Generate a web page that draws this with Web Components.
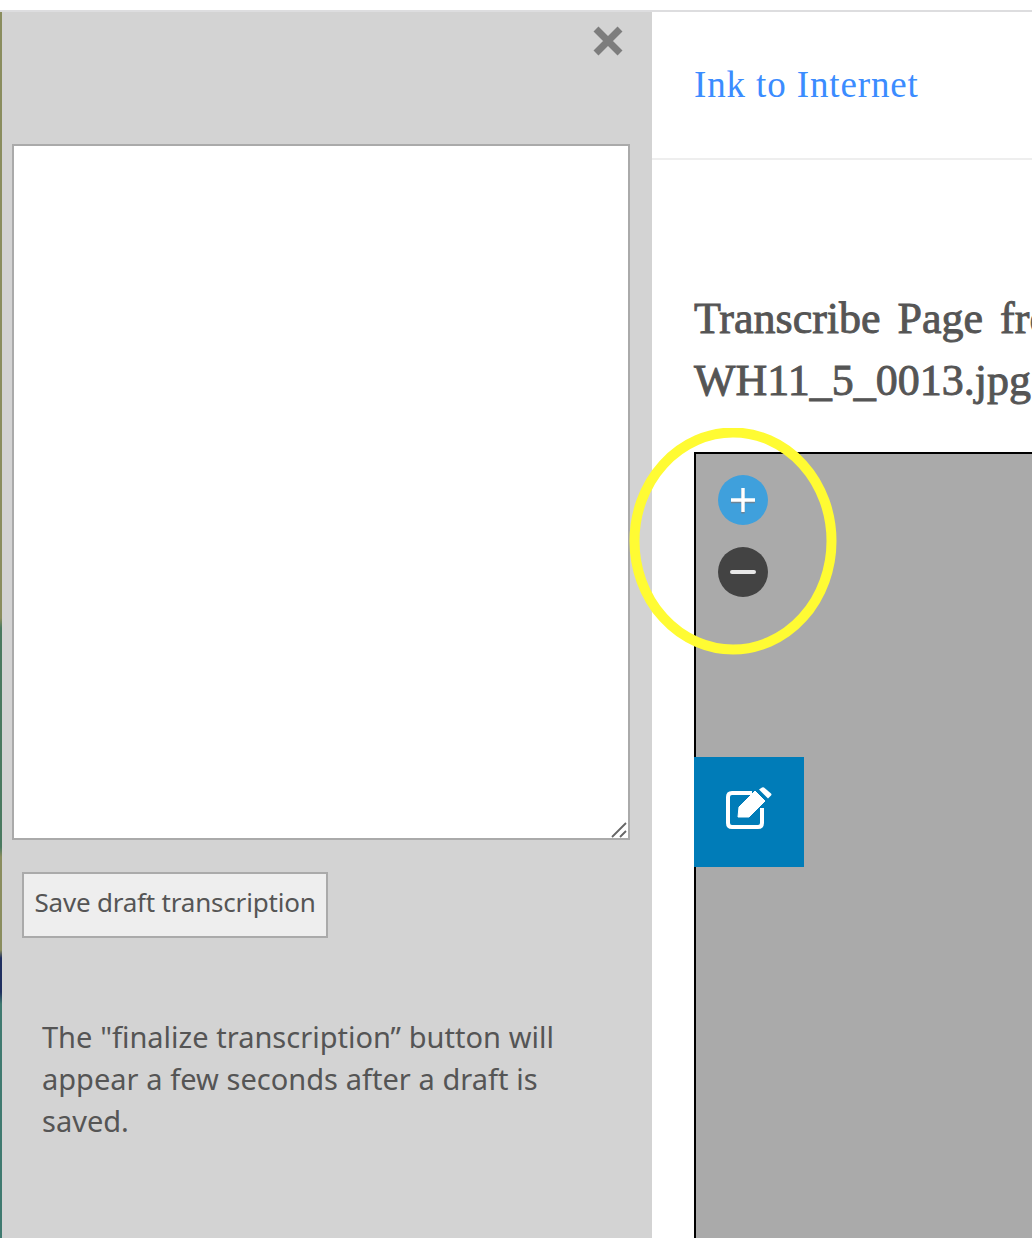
<!DOCTYPE html>
<html lang="en">
<head>
<meta charset="utf-8">
<title>Transcribe Page</title>
<style>
  html, body { margin: 0; height: 100%; background: #fff; overflow: hidden; }
</style>
</head>
<body>
<transcribe-page>
  <transcribe-panel slot="panel">
    The "finalize transcription” button will appear a few seconds after a draft is saved.
  </transcribe-panel>
  <page-main slot="main" brand="Ink to Internet">
    <span slot="heading">Transcribe Page from<br>WH11_5_0013.jpg</span>
  </page-main>
</transcribe-page>

<script>
class TranscribePage extends HTMLElement {
  constructor() {
    super();
    this.attachShadow({ mode: 'open' });
  }

  connectedCallback() {
    this.render();
  }

  render() {
    this.shadowRoot.innerHTML = `
      <style>
        :host {
          display: block;
          width: 1032px;
          height: 1238px;
          overflow: hidden;
          padding-top: 10px;
          box-sizing: border-box;
        }
        .frame {
          display: flex;
          height: 1228px;
          border-top: 2px solid #dddddf;
          box-sizing: border-box;
        }
        .edge {
          flex: 0 0 2px;
          background: linear-gradient(#8a8d5e 0, #8a8d5e 606px, #4a7a60 616px, #4a7a60 835px, #8a8d5e 845px, #8a8d5e 938px, #1f2f60 946px, #1f2f60 980px, #3f7a70 992px);
        }
        ::slotted([slot="panel"]) { flex: 0 0 650px; }
        ::slotted([slot="main"]) { flex: 1; min-width: 0; }
      </style>
      <div class="frame">
        <div class="edge"></div>
        <slot name="panel"></slot>
        <slot name="main"></slot>
      </div>
    `;
  }
}

class TranscribePanel extends HTMLElement {
  constructor() {
    super();
    this.attachShadow({ mode: 'open' });
  }

  connectedCallback() {
    this.render();
  }

  render() {
    this.shadowRoot.innerHTML = `
      <style>
        :host {
          display: block;
          background: #d3d3d3;
          box-sizing: border-box;
          padding: 0 22px 0 10px;
          font-family: "Noto Sans", sans-serif;
          color: #555;
        }
        .top {
          height: 132px;
          display: flex;
          justify-content: flex-end;
          align-items: flex-start;
          padding: 13px 0 0;
          box-sizing: border-box;
        }
        .close { display: block; margin-right: 6px; }
        .editor {
          position: relative;
          width: 618px;
          height: 696px;
        }
        textarea {
          display: block;
          width: 100%;
          height: 100%;
          margin: 0;
          padding: 0;
          box-sizing: border-box;
          border: 2px solid #aaa;
          background: #fff;
          border-radius: 0;
          outline: none;
          resize: none;
        }
        .grip {
          position: absolute;
          right: 2px;
          bottom: 2px;
        }
        button {
          display: block;
          margin: 32px 0 0 10px;
          width: 306px;
          height: 66px;
          box-sizing: border-box;
          border: 2px solid #aaa;
          border-radius: 0;
          background: #eee;
          color: #555;
          font: 26px/1 "Noto Sans", sans-serif;
          letter-spacing: -0.2px;
          padding: 0 0 6px;
          white-space: nowrap;
        }
        p {
          margin: 78px 0 0 30px;
          width: 530px;
          font-size: 29px;
          line-height: 42px;
          word-spacing: 0.2px;
        }
      </style>
      <div class="top">
        <svg class="close" width="32" height="32" viewBox="0 0 32 32" aria-label="Close">
          <path d="M4 4 28 28M28 4 4 28" stroke="#7d7d7d" stroke-width="7" fill="none"/>
        </svg>
      </div>
      <div class="editor">
        <textarea></textarea>
        <svg class="grip" width="18" height="16" viewBox="0 0 18 16">
          <path d="M2 15 16 1M10 15 16 9" stroke="#666" stroke-width="1.8" fill="none"/>
        </svg>
      </div>
      <button type="button">Save draft transcription</button>
      <p><slot></slot></p>
    `;
  }
}

class PageMain extends HTMLElement {
  constructor() {
    super();
    this.attachShadow({ mode: 'open' });
  }

  static get observedAttributes() {
    return ['brand'];
  }

  get brand() {
    return this.getAttribute('brand') || '';
  }

  connectedCallback() {
    this.render();
  }

  render() {
    this.shadowRoot.innerHTML = `
      <style>
        :host {
          display: block;
          position: relative;
          background: #fff;
          height: 100%;
        }
        header {
          height: 148px;
          box-sizing: border-box;
          border-bottom: 2px solid #eee;
          padding: 51px 0 0 42px;
        }
        a {
          color: #3b8cff;
          text-decoration: none;
          font: 37px/44px "Liberation Serif", serif;
          letter-spacing: 0.87px;
        }
        h2 {
          margin: 128px 0 0 42px;
          width: 600px;
          height: 124px;
          color: #555;
          font: 400 44px/62px "Liberation Serif", serif;
          -webkit-text-stroke: 0.9px #555;
          word-spacing: 6px;
          white-space: nowrap;
        }
        .ring {
          position: absolute;
          left: -24px;
          top: 416px;
        }
      </style>
      <header><a href="#">${this.brand}</a></header>
      <h2><slot name="heading"></slot></h2>
      <image-viewer></image-viewer>
      <svg class="ring" width="210" height="230" viewBox="0 0 210 230">
        <ellipse cx="105" cy="113" rx="98.5" ry="108.5" fill="none" stroke="#fffb33" stroke-width="10"/>
      </svg>
    `;
  }
}

class ImageViewer extends HTMLElement {
  constructor() {
    super();
    this.attachShadow({ mode: 'open' });
  }

  connectedCallback() {
    this.render();
  }

  render() {
    this.shadowRoot.innerHTML = `
      <style>
        :host {
          display: block;
          margin: 40px 0 0 42px;
          height: 800px;
          background: #aaa;
          border-left: 2px solid #000;
          border-top: 2px solid #000;
          box-sizing: border-box;
        }
        .zoom {
          display: flex;
          flex-direction: column;
          gap: 20px;
          padding: 20px 0 0 21px;
        }
        .zoom svg { display: block; filter: blur(.5px); }
        .edit {
          display: flex;
          align-items: center;
          justify-content: center;
          margin: 159px 0 0 -2px;
          width: 110px;
          height: 110px;
          background: #007cb8;
        }
      </style>
      <div class="zoom">
        <svg width="52" height="52" viewBox="0 0 52 52" aria-label="Zoom in">
          <circle cx="26" cy="26" r="25" fill="#3fa0dc"/>
          <path d="M14 26H38M26 14V38" stroke="#6b8496" stroke-width="3.4" transform="translate(0 1.5)"/>
          <path d="M14 26H38M26 14V38" stroke="#fff" stroke-width="3.4"/>
        </svg>
        <svg width="52" height="52" viewBox="0 0 52 52" aria-label="Zoom out">
          <circle cx="26" cy="26" r="25" fill="#434343"/>
          <path d="M15 26H37" stroke="#e8e8e8" stroke-width="4" stroke-linecap="round"/>
        </svg>
      </div>
      <div class="edit">
        <svg width="46" height="42" viewBox="0 0 46 42" aria-label="Edit" style="margin:-8px 0 0 0">
          <path d="M26 6H6Q2 6 2 10V36Q2 40 6 40H32Q36 40 36 36V21" fill="none" stroke="#fff" stroke-width="4"/>
          <path d="M12 30 13 20 29 4 39 14 23 30Z" fill="#fff" stroke="#fff" stroke-linejoin="round"/>
          <path d="M33 2.5 36 .5Q37 0 38 .5L45 6.5Q46 7.5 45 8.5L42 11.5Z" fill="#fff"/>
        </svg>
      </div>
    `;
  }
}

customElements.define('transcribe-page', TranscribePage);
customElements.define('transcribe-panel', TranscribePanel);
customElements.define('page-main', PageMain);
customElements.define('image-viewer', ImageViewer);
</script>
</body>
</html>
